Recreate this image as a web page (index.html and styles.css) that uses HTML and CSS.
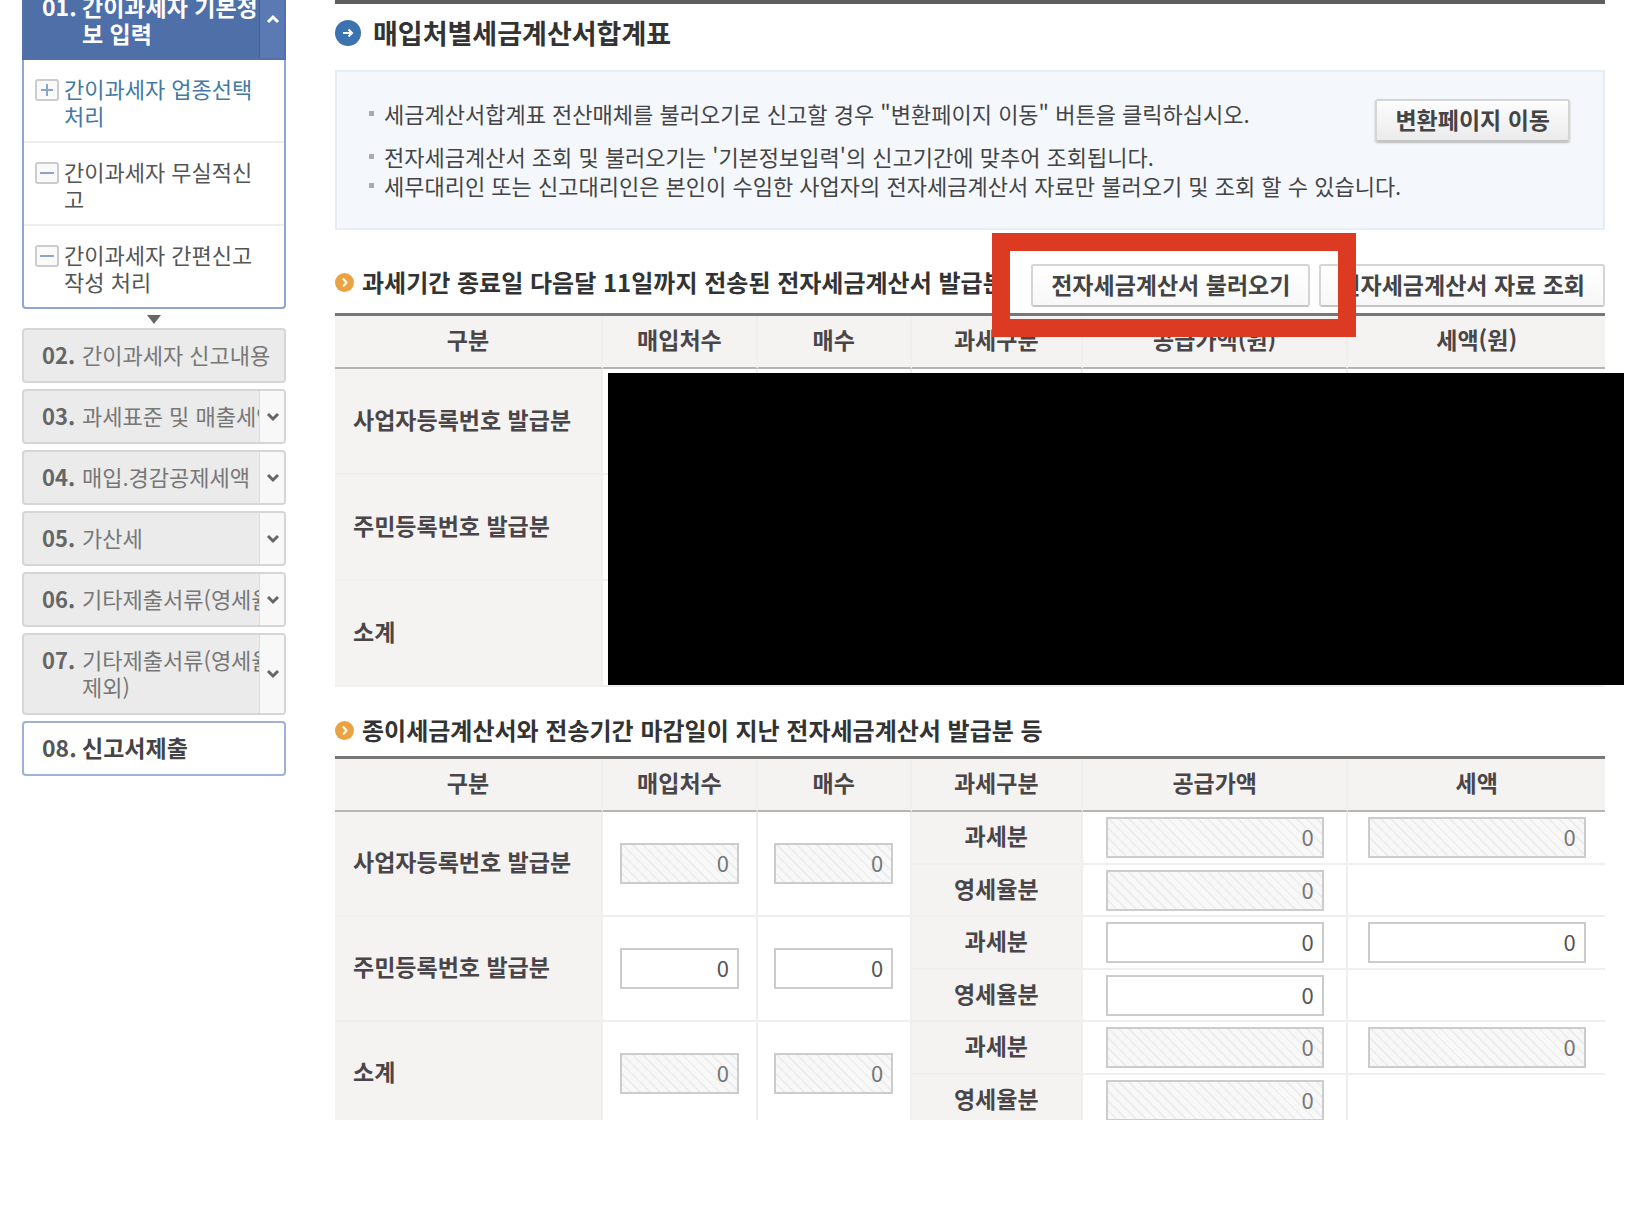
FILE: index.html
```html
<!DOCTYPE html>
<html lang="ko">
<head>
	<meta charset="UTF-8">
	<meta name="viewport" content="width=device-width, initial-scale=1.0">
	<title>매입처별세금계산서합계표</title>
	<link rel="stylesheet" href="styles.css">
</head>
<body>
	<div class="page">
		<nav class="steps">
			<div class="step step-open">
				<a class="step-link" href="#"><span class="num">01.</span><span>간이과세자 기본정<br>보 입력</span></a>
				<button class="toggle" aria-label="접기">
					<svg width="14" height="10" viewBox="0 0 14 10"><path d="M2 8L7 3L12 8" fill="none" stroke="currentColor" stroke-width="3"/></svg>
				</button>
			</div>
			<ul class="sub-list">
				<li><a class="sub-link current" href="#">
					<svg class="sign" viewBox="0 0 24 22"><rect x="1" y="1" width="22" height="20" rx="2"/><path d="M6 11H18M12 5V17"/></svg>
					<span>간이과세자 업종선택<br>처리</span></a></li>
				<li><a class="sub-link" href="#">
					<svg class="sign" viewBox="0 0 24 22"><rect x="1" y="1" width="22" height="20" rx="2"/><path d="M5 11H19"/></svg>
					<span>간이과세자 무실적신<br>고</span></a></li>
				<li><a class="sub-link" href="#">
					<svg class="sign" viewBox="0 0 24 22"><rect x="1" y="1" width="22" height="20" rx="2"/><path d="M5 11H19"/></svg>
					<span>간이과세자 간편신고<br>작성 처리</span></a></li>
			</ul>
			<div class="next-arrow"></div>
			<div class="step-group">
				<div class="step">
					<a class="step-link" href="#"><span class="num">02.</span><span>간이과세자 신고내용</span></a>
				</div>
				<div class="step">
					<a class="step-link" href="#"><span class="num">03.</span><span>과세표준 및 매출세액</span></a>
					<button class="toggle" aria-label="펼치기"><svg width="14" height="10" viewBox="0 0 14 10"><path d="M2 2L7 7L12 2" fill="none" stroke="currentColor" stroke-width="3"/></svg></button>
				</div>
				<div class="step">
					<a class="step-link" href="#"><span class="num">04.</span><span>매입.경감공제세액</span></a>
					<button class="toggle" aria-label="펼치기"><svg width="14" height="10" viewBox="0 0 14 10"><path d="M2 2L7 7L12 2" fill="none" stroke="currentColor" stroke-width="3"/></svg></button>
				</div>
				<div class="step">
					<a class="step-link" href="#"><span class="num">05.</span><span>가산세</span></a>
					<button class="toggle" aria-label="펼치기"><svg width="14" height="10" viewBox="0 0 14 10"><path d="M2 2L7 7L12 2" fill="none" stroke="currentColor" stroke-width="3"/></svg></button>
				</div>
				<div class="step">
					<a class="step-link" href="#"><span class="num">06.</span><span>기타제출서류(영세율</span></a>
					<button class="toggle" aria-label="펼치기"><svg width="14" height="10" viewBox="0 0 14 10"><path d="M2 2L7 7L12 2" fill="none" stroke="currentColor" stroke-width="3"/></svg></button>
				</div>
				<div class="step">
					<a class="step-link" href="#"><span class="num">07.</span><span>기타제출서류(영세율<br>제외)</span></a>
					<button class="toggle" aria-label="펼치기"><svg width="14" height="10" viewBox="0 0 14 10"><path d="M2 2L7 7L12 2" fill="none" stroke="currentColor" stroke-width="3"/></svg></button>
				</div>
				<div class="step step-submit">
					<a class="step-link" href="#"><span class="num">08.</span><span>신고서제출</span></a>
				</div>
			</div>
		</nav>

		<main class="content">
			<h2 class="title">
				<svg width="26" height="26" viewBox="0 0 26 26"><circle cx="13" cy="13" r="13" fill="#3b73b0"/><path d="M8 13H17M13.500 9.500L17 13L13.500 16.500" fill="none" stroke="#fff" stroke-width="2"/></svg>
				매입처별세금계산서합계표
			</h2>

			<div class="notice">
				<ul>
					<li class="spaced">세금계산서합계표 전산매체를 불러오기로 신고할 경우 "변환페이지 이동" 버튼을 클릭하십시오.</li>
					<li>전자세금계산서 조회 및 불러오기는 '기본정보입력'의 신고기간에 맞추어 조회됩니다.</li>
					<li>세무대리인 또는 신고대리인은 본인이 수임한 사업자의 전자세금계산서 자료만 불러오기 및 조회 할 수 있습니다.</li>
				</ul>
				<button class="btn btn-gray">변환페이지 이동</button>
			</div>

			<section>
				<div class="section-head with-buttons">
					<h3>
						<svg width="19" height="19" viewBox="0 0 19 19"><circle cx="9.500" cy="9.500" r="9.500" fill="#e9a345"/><path d="M8 5.500L11.500 9.500L8 13.500" fill="none" stroke="#fff" stroke-width="2"/></svg>
						과세기간 종료일 다음달 11일까지 전송된 전자세금계산서 발급분
					</h3>
					<div class="buttons">
						<button class="btn">전자세금계산서 불러오기</button>
						<button class="btn">전자세금계산서 자료 조회</button>
						<div class="highlight"></div>
					</div>
				</div>
				<div class="table-wrap">
					<table class="tax-table">
						<colgroup><col class="c1"><col class="c2"><col class="c3"><col class="c4"><col class="c5"><col class="c6"></colgroup>
						<thead>
							<tr><th>구분</th><th>매입처수</th><th>매수</th><th>과세구분</th><th>공급가액(원)</th><th>세액(원)</th></tr>
						</thead>
						<tbody class="tall">
							<tr><th class="row-name">사업자등록번호 발급분</th><td></td><td></td><td></td><td></td><td></td></tr>
							<tr><th class="row-name">주민등록번호 발급분</th><td></td><td></td><td></td><td></td><td></td></tr>
							<tr><th class="row-name">소계</th><td></td><td></td><td></td><td></td><td></td></tr>
						</tbody>
					</table>
					<div class="mask"></div>
				</div>
			</section>

			<section>
				<div class="section-head">
					<h3>
						<svg width="19" height="19" viewBox="0 0 19 19"><circle cx="9.500" cy="9.500" r="9.500" fill="#e9a345"/><path d="M8 5.500L11.500 9.500L8 13.500" fill="none" stroke="#fff" stroke-width="2"/></svg>
						종이세금계산서와 전송기간 마감일이 지난 전자세금계산서 발급분 등
					</h3>
				</div>
				<div class="table-wrap table-clip">
					<table class="tax-table">
						<colgroup><col class="c1"><col class="c2"><col class="c3"><col class="c4"><col class="c5"><col class="c6"></colgroup>
						<thead>
							<tr><th>구분</th><th>매입처수</th><th>매수</th><th>과세구분</th><th>공급가액</th><th>세액</th></tr>
						</thead>
						<tbody>
							<tr>
								<th class="row-name" rowspan="2">사업자등록번호 발급분</th>
								<td rowspan="2"><input type="text" value="0" aria-label="사업자 매입처수" readonly></td>
								<td rowspan="2"><input type="text" value="0" aria-label="사업자 매수" readonly></td>
								<th>과세분</th>
								<td><input class="wide" type="text" value="0" aria-label="사업자 과세분 공급가액" readonly></td>
								<td><input class="wide" type="text" value="0" aria-label="사업자 과세분 세액" readonly></td>
							</tr>
							<tr>
								<th>영세율분</th>
								<td><input class="wide" type="text" value="0" aria-label="사업자 영세율분 공급가액" readonly></td>
								<td></td>
							</tr>
							<tr>
								<th class="row-name" rowspan="2">주민등록번호 발급분</th>
								<td rowspan="2"><input type="text" value="0" aria-label="주민 매입처수"></td>
								<td rowspan="2"><input type="text" value="0" aria-label="주민 매수"></td>
								<th>과세분</th>
								<td><input class="wide" type="text" value="0" aria-label="주민 과세분 공급가액"></td>
								<td><input class="wide" type="text" value="0" aria-label="주민 과세분 세액"></td>
							</tr>
							<tr>
								<th>영세율분</th>
								<td><input class="wide" type="text" value="0" aria-label="주민 영세율분 공급가액"></td>
								<td></td>
							</tr>
							<tr>
								<th class="row-name" rowspan="2">소계</th>
								<td rowspan="2"><input type="text" value="0" aria-label="소계 매입처수" readonly></td>
								<td rowspan="2"><input type="text" value="0" aria-label="소계 매수" readonly></td>
								<th>과세분</th>
								<td><input class="wide" type="text" value="0" aria-label="소계 과세분 공급가액" readonly></td>
								<td><input class="wide" type="text" value="0" aria-label="소계 과세분 세액" readonly></td>
							</tr>
							<tr>
								<th>영세율분</th>
								<td><input class="wide" type="text" value="0" aria-label="소계 영세율분 공급가액" readonly></td>
								<td></td>
							</tr>
						</tbody>
					</table>
				</div>
			</section>
		</main>
	</div>
</body>
</html>
```

FILE: styles.css
```css
* {
	box-sizing: border-box;
}
body {
	margin: 0;
	background: #fff;
	color: #444;
	font-family: "Noto Sans CJK KR", sans-serif;
	font-size: 22px;
}
ul, h2, h3 {
	margin: 0;
	padding: 0;
	list-style: none;
}
a {
	color: inherit;
	text-decoration: none;
}
button, input {
	font-family: inherit;
}
.page {
	display: flex;
	gap: 49px;
	padding: 0 29px 0 22px;
	overflow: hidden;
}

/* left menu */
.steps {
	flex: none;
	width: 264px;
}
.step {
	display: flex;
	border: 2px solid #d6d6d6;
	border-radius: 4px;
	background: #ebebeb;
	color: #777;
	line-height: 27px;
	overflow: hidden;
}
.step-link {
	flex: 1;
	min-width: 0;
	display: flex;
	padding: 11px 0 13px 18px;
	white-space: nowrap;
	overflow: hidden;
}
.num {
	flex: none;
	width: 40px;
	font-weight: bold;
	color: #666;
}
.toggle {
	flex: none;
	display: flex;
	align-items: center;
	justify-content: center;
	width: 25px;
	padding: 0 0 0 2px;
	border: 0;
	border-left: 1px solid #ddd;
	background: #f8f8f8;
	color: #666;
	cursor: pointer;
}
.step-open {
	margin-top: -22px;
	border-color: #5470ab;
	border-radius: 4px 4px 0 0;
	background: #4f6fa8;
	color: #fff;
	font-size: 23px;
	font-weight: bold;
}
.step-open .step-link {
	padding: 13px 0 11px 18px;
}
.step-open .num {
	color: #fff;
}
.step-open .toggle {
	border-left-color: #42609a;
	background: #5b79b3;
	color: #fff;
}
.step-submit {
	border-color: #9db2d6;
	background: #fff;
	color: #444;
	font-size: 23px;
	font-weight: bold;
}
.step-submit .num {
	color: #555;
}
.sub-list {
	border: 2px solid #8ea6d2;
	border-top: 0;
	border-radius: 0 0 4px 4px;
	background: #fff;
}
.sub-list li {
	border-bottom: 2px solid #eee;
}
.sub-list li:last-child {
	border-bottom: 0;
}
.sub-link {
	display: flex;
	gap: 5px;
	padding: 15px 0 12px 11px;
	line-height: 27px;
	white-space: nowrap;
	color: #555;
}
.sub-link.current {
	color: #4379a5;
}
.sign {
	flex: none;
	width: 24px;
	height: 22px;
	margin-top: 4px;
	fill: #fafafa;
	stroke: #ccc;
	stroke-width: 2;
}
.sign path {
	stroke: #8ba3cf;
}
.next-arrow {
	width: 14px;
	margin: 6px auto 4px;
	border: 7px solid transparent;
	border-top: 9px solid #666;
	border-bottom: 0;
}
.step-group {
	display: flex;
	flex-direction: column;
	gap: 6px;
}

/* right side */
.content {
	flex: 1;
	min-width: 0;
	border-top: 4px solid #5c5f5c;
}
.title {
	display: flex;
	align-items: center;
	gap: 12px;
	margin-bottom: 8px;
	font-size: 27px;
	line-height: 58px;
	color: #333;
}
.notice {
	display: flex;
	align-items: flex-start;
	padding: 27px 33px 28px 32px;
	border: 2px solid #e6edf3;
	background: #f4f8fd;
	line-height: 29px;
}
/* the last line may run on under the button */
.notice ul {
	flex: 1;
	min-width: 0;
}
.notice li {
	display: flex;
	align-items: center;
	gap: 10px;
	white-space: nowrap;
}
.notice li::before {
	content: "";
	flex: none;
	width: 5px;
	height: 5px;
	background: #aaa;
}
.notice .spaced {
	margin-bottom: 14px;
}
.btn {
	height: 43px;
	padding: 0 18px 2px;
	border: 2px solid #d5d5d5;
	border-bottom-color: #c4c4c4;
	border-radius: 3px;
	background: linear-gradient(#fff, #f7f7f7);
	color: #444;
	font-size: 23px;
	font-weight: bold;
	line-height: 35px;
	white-space: nowrap;
	cursor: pointer;
}
.btn-gray {
	background: linear-gradient(#fdfdfd, #ebebeb);
	box-shadow: 0 1px 2px #bbb;
}
.section-head {
	display: flex;
	align-items: flex-start;
	justify-content: space-between;
	padding: 25px 0 8px;
}
.section-head.with-buttons {
	padding: 34px 0 6px;
}
.section-head h3 {
	display: flex;
	align-items: center;
	gap: 8px;
	font-size: 24px;
	line-height: 36px;
	white-space: nowrap;
	color: #333;
}
.buttons {
	position: relative;
	display: flex;
	gap: 9px;
}
/* red frame round the load button */
.highlight {
	position: absolute;
	top: -31px;
	left: -39px;
	width: 364px;
	height: 104px;
	border: 18px solid #dc3a22;
	z-index: 2;
	pointer-events: none;
}
.table-wrap {
	position: relative;
}
.table-clip {
	max-height: 364px;
	overflow: hidden;
}
/* black box over the private figures */
.mask {
	position: absolute;
	top: 60px;
	right: -19px;
	bottom: 2px;
	left: 273px;
	background: #000;
}
.tax-table {
	width: 100%;
	table-layout: fixed;
	border-spacing: 0;
	border-top: 3px solid #777;
	font-size: 23px;
	line-height: 34px;
}
.c1 { width: 21.1%; }
.c2 { width: 12.2%; }
.c3 { width: 12.1%; }
.c4 { width: 13.5%; }
.c5 { width: 20.9%; }
.c6 { width: 20.2%; }
.tax-table th, .tax-table td {
	height: 53px;
	padding: 0;
	border-right: 2px solid #efefef;
	border-bottom: 2px solid #efefef;
	text-align: center;
	vertical-align: middle;
	white-space: nowrap;
}
.tax-table tr > :last-child {
	border-right: 0;
}
.tax-table th {
	padding-bottom: 5px;
	background: #f4f3f1;
	color: #4a4548;
}
.tax-table thead th {
	border-bottom-color: #b5b5b5;
}
.tax-table .row-name {
	padding-left: 18px;
	text-align: left;
}
.tax-table tbody tr:nth-child(even) > * {
	height: 52px;
}
.tax-table tbody.tall tr > * {
	height: 106px;
}
.tax-table input {
	display: block;
	width: 119px;
	height: 41px;
	margin: 0 auto;
	padding: 0 8px 3px;
	border: 2px solid #ccc;
	background: #fff;
	color: #555;
	font-size: 22px;
	text-align: right;
}
.tax-table input.wide {
	width: 218px;
}
.tax-table input:read-only {
	background: repeating-linear-gradient(45deg, #f8f8f8 0, #f8f8f8 5px, #eee 5px, #eee 7px);
	color: #777;
}
```
